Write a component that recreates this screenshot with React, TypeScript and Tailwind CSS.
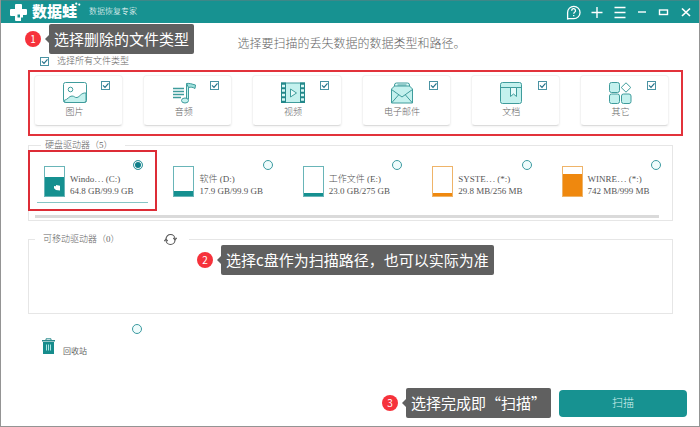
import type { ReactNode } from "react";

type Drive = {
  name: string;
  usage: string;
  fill: number;
  tone: "teal" | "orange";
  system?: boolean;
};

const drives: Drive[] = [
  { name: "Windo⋯ (C:)", usage: "64.8 GB/99.9 GB", fill: 66, tone: "teal", system: true },
  { name: "软件 (D:)", usage: "17.9 GB/99.9 GB", fill: 18, tone: "teal" },
  { name: "工作文件 (E:)", usage: "23.0 GB/275 GB", fill: 9, tone: "teal" },
  { name: "SYSTE⋯ (*:)", usage: "29.8 MB/256 MB", fill: 12, tone: "orange" },
  { name: "WINRE⋯ (*:)", usage: "742 MB/999 MB", fill: 76, tone: "orange" },
];

const iconProps = {
  className: "h-[22px] w-[24px]",
  viewBox: "0 0 24 22",
  fill: "none",
  stroke: "#3f9c9c",
  strokeWidth: 1,
  "aria-hidden": true,
} as const;

const fileTypes: { label: string; icon: ReactNode }[] = [
  {
    label: "图片",
    icon: (
      <svg {...iconProps}>
        <rect x="0.5" y="0.5" width="23" height="20" rx="2" />
        <path d="M1 18.5c4-1 5-4.500 8-4.500 2.500 0 3 2 5 1.500 3-.6 4-5 9-4.500V18.500a2 2 0 0 1-2 2H3a2 2 0 0 1-2-2z" fill="#c4f1ee" />
        <circle cx="7.500" cy="7.500" r="2.300" />
      </svg>
    ),
  },
  {
    label: "音频",
    icon: (
      <svg {...iconProps}>
        <path d="M1 6.500h11M1 9.500h11M1 12.500h11M1 15.500h8" strokeWidth="1.600" />
        <path d="M14.500 17.500V2h2v15.500" fill="#c4f1ee" />
        <path d="M14.500 1.500c3-.5 5 .5 9 1.500l-.5 3.500c-2.500-1.500-4-1.500-6.500-1z" fill="#9fe0dc" />
        <ellipse cx="13" cy="18.500" rx="3.500" ry="2.500" fill="#c4f1ee" />
      </svg>
    ),
  },
  {
    label: "视频",
    icon: (
      <svg {...iconProps}>
        <rect x="0.500" y="1" width="23" height="19.500" fill="#c4f1ee" />
        <rect x="0" y="0.500" width="5" height="20.500" fill="#23888a" stroke="none" />
        <rect x="19" y="0.500" width="5" height="20.500" fill="#23888a" stroke="none" />
        <path d="M1 4h3M1 8.500h3M1 13h3M1 17.500h3M20 4h3M20 8.500h3M20 13h3M20 17.500h3" stroke="#d9f8f6" strokeWidth="2.400" />
        <path d="M9.500 7v8l6-4z" fill="#e6fbfa" />
      </svg>
    ),
  },
  {
    label: "电子邮件",
    icon: (
      <svg {...iconProps}>
        <path d="M4.500 8V3a2 2 0 0 1 2-2h11a2 2 0 0 1 2 2v5" fill="#e6fbfa" />
        <path d="M1.500 7l3-3h15l3 3v14h-21z" fill="#c4f1ee" />
        <path d="M1.500 7.500L12 15l10.500-7.500M1.500 21l7-8M22.500 21l-7-8M7.500 3h9" />
      </svg>
    ),
  },
  {
    label: "文档",
    icon: (
      <svg {...iconProps}>
        <rect x="1.500" y="0.500" width="21" height="21" rx="2" fill="#c4f1ee" />
        <path d="M2 5.500h20" />
        <path d="M11.500 5.500v9l3-2.500 3 2.500v-9z" fill="#e6fbfa" />
      </svg>
    ),
  },
  {
    label: "其它",
    icon: (
      <svg {...iconProps}>
        <rect x="1.500" y="0.500" width="10" height="10" rx="2" fill="#c4f1ee" />
        <path d="M18 0.800l4.800 4.700L18 10.200 13.200 5.500z" />
        <rect x="1.500" y="12" width="10" height="9.500" rx="2" fill="#c4f1ee" />
        <rect x="13.500" y="12" width="9.500" height="9.500" rx="2" fill="#c4f1ee" />
      </svg>
    ),
  },
];

function Checkbox({ id }: { id: string }) {
  return (
    <span className="relative flex size-[9px]">
      <input
        id={id}
        type="checkbox"
        defaultChecked
        className="peer size-[9px] appearance-none border border-[#4a93a3] bg-white"
      />
      <svg
        className="pointer-events-none absolute inset-0 hidden size-[9px] peer-checked:block"
        viewBox="0 0 9 9"
        fill="none"
        stroke="#24728a"
        strokeWidth="1.200"
        aria-hidden="true"
      >
        <path d="M2 4.300l2 2 3.500-4" />
      </svg>
    </span>
  );
}

function SourceRadio({ id, checked }: { id: string; checked?: boolean }) {
  return (
    <input
      id={id}
      type="radio"
      name="source"
      defaultChecked={checked}
      className="absolute top-2 right-3 size-[10px] appearance-none rounded-full border border-[#3b9aa0] bg-[#effcfc] checked:bg-[#0f7f8a] checked:shadow-[inset_0_0_0_1px_white]"
    />
  );
}

function Badge({ children }: { children: ReactNode }) {
  return (
    <span className="flex size-4 items-center justify-center rounded-full bg-[#f6323b] text-[10px] leading-4 text-white">
      {children}
    </span>
  );
}

function Callout({ step, children }: { step: number; children: ReactNode }) {
  return (
    <div className="flex items-center font-['Noto_Sans_CJK_SC',sans-serif]">
      <Badge>{step}</Badge>
      <svg className="ml-1 h-2 w-1" viewBox="0 0 4 8" fill="#606060" aria-hidden="true">
        <path d="M4 0v8L0 4z" />
      </svg>
      <p className="rounded-xs bg-[#606060] px-[5px] text-[15px] leading-[30px] whitespace-nowrap text-white">
        {children}
      </p>
    </div>
  );
}

function DriveCard({ drive, index }: { drive: Drive; index: number }) {
  const id = `drive-${index}`;
  const teal = drive.tone === "teal";
  return (
    <div
      className={`relative border-2 pt-[14px] ${
        drive.system ? "border-[#dd2c36]" : "border-transparent"
      }`}
    >
      <SourceRadio id={id} checked={drive.system} />
      <label htmlFor={id} className="flex items-end gap-[5px] pl-[14px]">
        <span
          className={`relative flex h-[31px] w-[21px] shrink-0 items-end border ${
            teal ? "border-[#69b5b8]" : "border-[#efb469]"
          }`}
        >
          <span
            className={`w-full ${teal ? "bg-[#159090]" : "bg-[#ef880e]"}`}
            style={{ height: `${drive.fill}%` }}
          />
          {drive.system && (
            <svg className="absolute right-1 bottom-[5px] size-[6px]" viewBox="0 0 6 6" fill="#fff" aria-hidden="true">
              <path d="M0 1l2 .3V0l4 .8V5.500L2 5 0 3.200z" />
            </svg>
          )}
        </span>
        <span className="text-[9px] leading-3 font-light whitespace-nowrap text-[#555]">
          {drive.name}
          <br />
          {drive.usage}
        </span>
      </label>
      <div className={`mx-[7px] mt-[5px] mb-[6px] h-px ${drive.system ? "bg-[#86c5c5]" : ""}`} />
    </div>
  );
}

function TitleBar() {
  return (
    <header className="flex h-[23px] items-center justify-between border-t border-[#3f8788] bg-[#179291] pr-[6px] pl-2 text-white">
      <div className="flex items-center">
        <svg className="size-[19px]" viewBox="0 0 19 19" fill="#fff" aria-hidden="true">
          <path d="M7 1h5a1 1 0 0 1 1 1v4h4a1 1 0 0 1 1 1v4a1 1 0 0 1-1 1h-3v2.500h-2V18H7a1 1 0 0 1-1-1v-4H2a1 1 0 0 1-1-1V7a1 1 0 0 1 1-1h4V2a1 1 0 0 1 1-1z" />
          <path d="M8.500 11.500h2.500v3H8.500z" fill="#179291" />
        </svg>
        <span className="relative ml-1 text-[15px] leading-5 font-black">
          数据蛙
          <svg className="absolute top-0 -right-1 size-[6px]" viewBox="0 0 7 7" fill="#fff" aria-hidden="true">
            <circle cx="1.500" cy="2" r="1.300" />
            <circle cx="5" cy="3" r="1.300" />
          </svg>
        </span>
        <span className="ml-3 text-[8px] leading-3 font-light">数据恢复专家</span>
      </div>
      <div className="flex items-center gap-2">
        <button type="button" aria-label="帮助">
          <svg className="size-[15px]" viewBox="0 0 14 14" fill="none" stroke="currentColor" strokeWidth="1.200" aria-hidden="true">
            <path d="M1.500 13V7A5.800 5.800 0 1 1 7.300 12.800H1z" />
            <path d="M5.300 5.300a1.800 1.800 0 1 1 2.700 1.500c-.6.4-.8.7-.8 1.400M7.200 9.300v1.300" />
          </svg>
        </button>
        <button type="button" aria-label="添加">
          <svg className="h-[14px] w-4" viewBox="0 0 16 14" stroke="currentColor" strokeWidth="1.400" aria-hidden="true">
            <path d="M8 2v11M2.500 7.500h11" />
          </svg>
        </button>
        <button type="button" aria-label="菜单">
          <svg className="h-[14px] w-[14px]" viewBox="0 0 14 14" stroke="currentColor" strokeWidth="1.300" aria-hidden="true">
            <path d="M1.500 2.500h11M1.500 7.500h11M1.500 12.500h11" />
          </svg>
        </button>
        <button type="button" aria-label="最小化">
          <svg className="h-[14px] w-[14px]" viewBox="0 0 14 14" stroke="currentColor" strokeWidth="1.400" aria-hidden="true">
            <path d="M3 7h8" />
          </svg>
        </button>
        <button type="button" aria-label="最大化">
          <svg className="h-[14px] w-[14px]" viewBox="0 0 14 14" fill="none" stroke="currentColor" strokeWidth="1.400" aria-hidden="true">
            <rect x="2.500" y="5" width="8" height="4.500" />
          </svg>
        </button>
        <button type="button" aria-label="关闭">
          <svg className="h-[14px] w-[14px]" viewBox="0 0 14 14" stroke="currentColor" strokeWidth="1.700" aria-hidden="true">
            <path d="M3 3.500l8 7.500M11 3.500L3 11" />
          </svg>
        </button>
      </div>
    </header>
  );
}

export default function App() {
  return (
    <div className="flex min-h-screen flex-col border-r border-b border-l border-[#949494] bg-white font-['Liberation_Serif','Noto_Sans_CJK_SC',serif] text-[#666]">
      <TitleBar />

      <main className="relative flex flex-1 flex-col pt-3 pr-4 pl-[27px]">
        <h1 className="pr-2 text-center text-[12px] leading-[18px] font-light">
          选择要扫描的丢失数据的数据类型和路径。
        </h1>
        <div className="absolute top-px left-6">
          <Callout step={1}>选择删除的文件类型</Callout>
        </div>

        <div className="mt-0.5 flex h-3 items-center gap-2 pl-3">
          <Checkbox id="all-types" />
          <label htmlFor="all-types" className="text-[9px] leading-3 font-light">
            选择所有文件类型
          </label>
        </div>

        <section className="mt-[3px] flex gap-5 border-2 border-[#e2323b] pt-[3px] pr-3 pb-2 pl-1">
          {fileTypes.map((type, i) => (
            <div
              key={type.label}
              className="relative flex-1 rounded-sm border border-[#f3f3f3] border-b-[#dcdcdc] py-1.5 pr-2 shadow-xs"
            >
              <label htmlFor={`type-${i}`} className="flex flex-col items-center">
                {type.icon}
                <span className="mt-px text-[9px] leading-[14px] font-light">{type.label}</span>
              </label>
              <div className="absolute top-[5px] right-3">
                <Checkbox id={`type-${i}`} />
              </div>
            </div>
          ))}
        </section>

        <fieldset className="mt-[3px] mr-[10px] min-w-0 border border-[#e6e6e6] pb-0.5">
          <legend className="ml-3 pr-3 pl-1 text-[9px] leading-3 font-light">硬盘驱动器（5）</legend>
          <div className="-mt-px -mr-[3px] -ml-px grid grid-cols-5">
            {drives.map((drive, i) => (
              <DriveCard key={drive.usage} drive={drive} index={i} />
            ))}
          </div>
          <div className="mt-1 mr-[13px] ml-1.5 h-[3px] bg-[#dadada]" />
        </fieldset>

        <fieldset className="relative mt-3 mr-[10px] min-w-0 border border-[#e6e6e6] pb-[68px]">
          <legend className="ml-1.5 flex h-3 items-center pr-3 pl-2 text-[9px] leading-3 font-light">
            可移动驱动器（0）
            <button type="button" aria-label="刷新" className="ml-11">
              <svg className="size-[13px]" viewBox="0 0 13 13" fill="none" stroke="#555" strokeWidth="1.100" aria-hidden="true">
                <path d="M2 6A4.500 4.500 0 0 1 11 6M11 7A4.500 4.500 0 0 1 2 7" />
                <path d="M9.300 5L11 6.800 12.700 5M.3 8L2 6.200 3.700 8" />
              </svg>
            </button>
          </legend>
          <div className="absolute top-0 left-[168px]">
            <Callout step={2}>选择c盘作为扫描路径，也可以实际为准</Callout>
          </div>
        </fieldset>

        <div className="relative w-32 border-2 border-transparent pt-[22px] pl-3">
          <SourceRadio id="recycle-bin" />
          <label htmlFor="recycle-bin" className="flex items-end gap-2 text-[8px] leading-3">
            <svg className="h-4 w-[13px]" viewBox="0 0 13 16" aria-hidden="true">
              <path d="M4 2V.8h5V2" fill="none" stroke="#2b8a8c" />
              <path d="M0 2h13v1.500H0z" fill="#2b8a8c" />
              <path d="M1 4h11v12H1z" fill="#168c8c" />
              <path d="M4.500 6.500v6M6.500 6.500v6M8.500 6.500v6" stroke="#a8e6e4" strokeWidth="1" />
            </svg>
            <span className="-mb-1">回收站</span>
          </label>
        </div>
      </main>

      <footer className="flex items-center justify-end gap-2 pr-3 pb-2">
        <Callout step={3}>选择完成即“扫描”</Callout>
        <button
          type="button"
          className="w-32 rounded-sm bg-[#179291] text-[11px] leading-[27px] font-light text-[#d5f1ef]"
        >
          扫描
        </button>
      </footer>
    </div>
  );
}
